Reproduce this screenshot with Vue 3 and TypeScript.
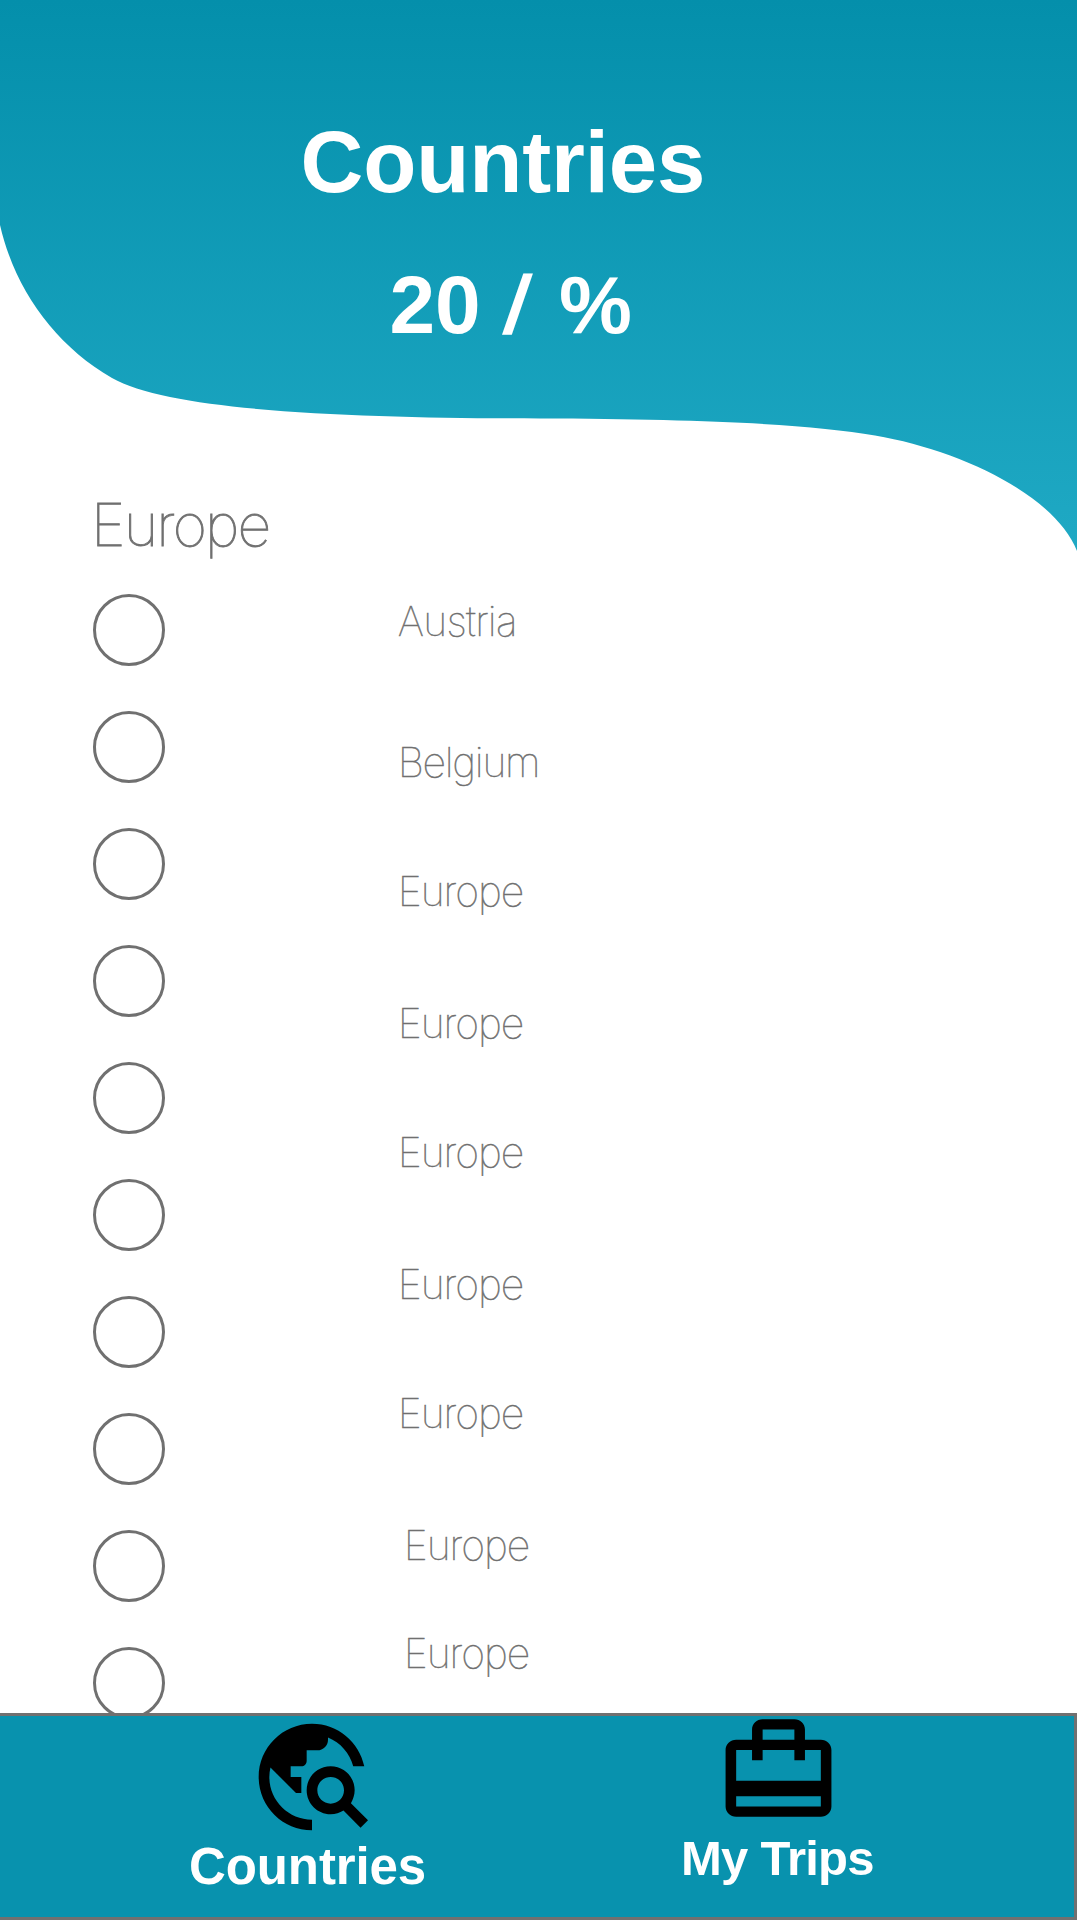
<script setup lang="ts">
interface Country {
  name: string
  /** distance from the previous entry, in px */
  gap: number
  indent?: number
  tracking: number
}

const countries: Country[] = [
  { name: 'Austria', gap: 2, tracking: -0.7 },
  { name: 'Belgium', gap: 91, tracking: -1.3 },
  { name: 'Europe', gap: 79, tracking: -1 },
  { name: 'Europe', gap: 82, tracking: -1 },
  { name: 'Europe', gap: 79, tracking: -1 },
  { name: 'Europe', gap: 82, tracking: -1 },
  { name: 'Europe', gap: 79, tracking: -1 },
  { name: 'Europe', gap: 82, indent: 6, tracking: -1 },
  { name: 'Europe', gap: 58, indent: 6, tracking: -1 },
]
const checks = 10
</script>

<template>
  <div class="screen">
    <header class="hero">
      <svg class="wave" viewBox="0 0 1077 551" aria-hidden="true">
        <defs>
          <linearGradient id="hero-fill" gradientUnits="userSpaceOnUse" x1="0" y1="0" x2="0" y2="551">
            <stop offset="0" stop-color="#048fab" />
            <stop offset="1" stop-color="#1fa9c4" />
          </linearGradient>
        </defs>
        <path
          fill="url(#hero-fill)"
          d="M0 0V225C15 290 55 345 112 378C175 414 380 418 540 418.5C700 419 810 424 875 435.5C960 450 1055 495 1077 551V0Z"
        />
      </svg>
      <h1 class="title">Countries</h1>
      <p class="count">20 <span class="slash">/</span> %</p>
    </header>

    <main class="content">
      <h2 class="region">Europe</h2>
      <div class="list">
        <div class="checks">
          <span v-for="n in checks" :key="n" class="check"></span>
        </div>
        <ul class="names">
          <li
            v-for="(c, i) in countries"
            :key="i"
            :style="{ marginTop: c.gap + 'px', marginLeft: (c.indent ?? 0) + 'px', letterSpacing: c.tracking + 'px' }"
          >{{ c.name }}</li>
        </ul>
      </div>
    </main>

    <nav class="tabs">
      <a class="tab tab-countries">
        <svg class="icon" viewBox="0 0 24 24" aria-hidden="true">
          <path d="M19.3 16.9c.4-.7.7-1.5.7-2.4 0-2.5-2-4.5-4.5-4.5S11 12 11 14.5s2 4.5 4.5 4.5c.9 0 1.7-.3 2.4-.7l3.2 3.2 1.4-1.4-3.2-3.2zm-3.8.1c-1.4 0-2.5-1.1-2.5-2.5s1.1-2.5 2.5-2.5 2.5 1.1 2.5 2.5-1.1 2.5-2.5 2.5zM12 20v2C6.48 22 2 17.52 2 12S6.48 2 12 2c4.84 0 8.87 3.44 9.8 8h-2.07c-.64-2.46-2.4-4.47-4.73-5.41V5c0 1.1-.9 2-2 2h-2v2c0 .55-.45 1-1 1H8v2h2v3H9l-4.79-4.79C4.08 10.79 4 11.38 4 12c0 4.41 3.59 8 8 8z" />
        </svg>
        <span class="label">Countries</span>
      </a>
      <a class="tab tab-trips">
        <svg class="icon" viewBox="0 0 24 24" preserveAspectRatio="none" aria-hidden="true">
          <path d="M20 6h-3V4c0-1.11-.89-2-2-2H9c-1.11 0-2 .89-2 2v2H4c-1.11 0-2 .89-2 2v11c0 1.11.89 2 2 2h16c1.11 0 2-.89 2-2V8c0-1.11-.89-2-2-2zM9 4h6v2H9V4zm11 15H4v-2h16v2zm0-5H4V8h3v2h2V8h6v2h2V8h3v6z" />
        </svg>
        <span class="label">My Trips</span>
      </a>
    </nav>
  </div>
</template>

<style>
body {
  margin: 0;
  background: #fff;
}
</style>

<style scoped>
.screen {
  display: flex;
  flex-direction: column;
  width: 1077px;
  height: 1920px;
  overflow: hidden;
  background: #fff;
  font-family: 'Liberation Sans', Arial, sans-serif;
}

.hero {
  position: relative;
  flex: none;
  box-sizing: border-box;
  height: 489.5px;
  padding-top: 112px;
  color: #fff;
  font-weight: 700;
}

.wave {
  position: absolute;
  top: 0;
  left: 0;
  width: 1077px;
  height: 551px;
}

.title,
.count {
  position: relative;
  margin: 0;
  line-height: 100px;
  white-space: nowrap;
}

.title {
  padding-left: 300.5px;
  font-size: 87px;
  font-weight: 700;
  letter-spacing: -0.15px;
}

.count {
  margin-top: 43px;
  padding-left: 389.5px;
  font-size: 82px;
  word-spacing: 3px;
}

.slash {
  display: inline-block;
  margin: 0 4.5px 0 -0.5px;
  transform: skewX(-9deg);
}

.content {
  position: relative;
  flex: 1;
  min-height: 0;
  overflow: hidden;
  padding-left: 91px;
  color: #707070;
  font-family: Inter, 'Liberation Sans', sans-serif;
  font-weight: 100;
  -webkit-text-stroke: 0.5px #707070;
}

.region {
  margin: 0;
  font-size: 59px;
  font-weight: 100;
  line-height: 70px;
  letter-spacing: -1.8px;
  -webkit-text-stroke-width: 0.9px;
}

.list {
  display: flex;
  margin-top: 34.5px;
  padding-left: 2px;
}

.checks {
  display: flex;
  flex-direction: column;
  gap: 45px;
  width: 304.7px;
}

.check {
  box-sizing: border-box;
  flex: none;
  width: 72px;
  height: 72px;
  border: 3px solid #707070;
  border-radius: 50%;
}

.names {
  margin: 0;
  padding: 0;
  list-style: none;
  font-size: 41px;
  line-height: 50px;
}

.tabs {
  flex: none;
  display: flex;
  box-sizing: border-box;
  height: 207px;
  padding-left: 189px;
  border: 3px solid #707070;
  border-left: 0;
  background: #0892ae;
}

.tab {
  display: flex;
  flex-direction: column;
  color: #fff;
  font-weight: 700;
  line-height: 50px;
  white-space: nowrap;
}

.tab-countries {
  width: 492px;
  font-size: 51px;
  letter-spacing: -0.1px;
}

.tab-trips {
  font-size: 49px;
  letter-spacing: -0.75px;
}

.icon {
  flex: none;
  fill: #000;
}

.tab-countries .icon {
  width: 128px;
  height: 128px;
  margin: -3.2px 0 0.7px 59px;
}

.tab-trips .icon {
  width: 127px;
  height: 123px;
  margin: -7px 0 1px 34px;
}
</style>
